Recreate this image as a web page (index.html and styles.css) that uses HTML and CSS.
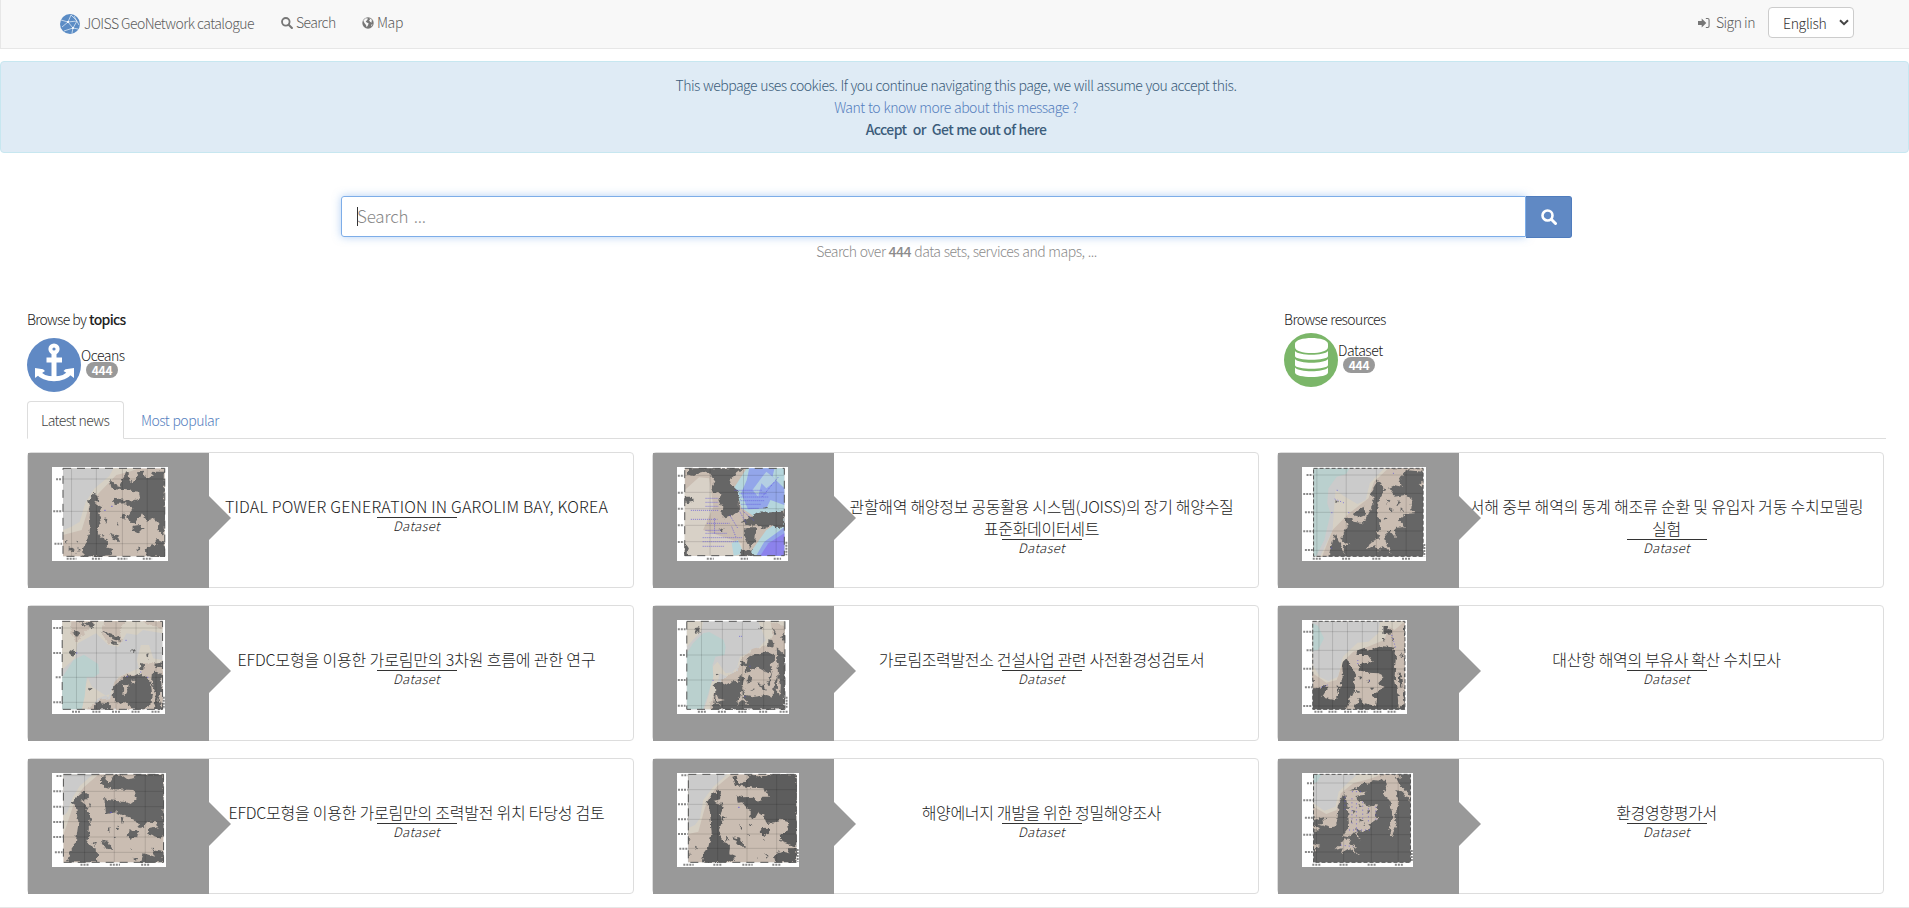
FILE: index.html
```html
<!DOCTYPE html>
<html lang="en">
<head>
<meta charset="utf-8">
<title>JOISS GeoNetwork catalogue</title>
<link rel="stylesheet" href="styles.css">
</head>
<body>
<svg class="defs" width="0" height="0"><filter id="coast" x="0" y="0" width="1" height="1"><feTurbulence type="fractalNoise" baseFrequency=".09" numOctaves="2" seed="4"/><feDisplacementMap in="SourceGraphic" scale="14" xChannelSelector="R" yChannelSelector="G"/></filter></svg>
<nav class="navbar">
  <a class="brand"><svg class="logo" viewBox="0 0 20 20"><circle cx="10" cy="10" r="10" fill="#5b8cc5"/><path d="M11 1 8 8 1 6M8 8l9-1M8 8l5 6-9 3M8 8 2 13M13 14l5 1M13 14l-1 5M11 1l6 6-4 7M14 2l5 9" fill="none" stroke="#dce8f4" stroke-width=".8"/><circle cx="8" cy="8" r="1.1" fill="#fff"/><circle cx="13" cy="14" r="1" fill="#fff"/></svg><span>JOISS GeoNetwork catalogue</span></a>
  <a class="nav-search"><svg class="ico" viewBox="0 0 13 13"><circle cx="5.2" cy="5.2" r="4.1" fill="none" stroke="#777" stroke-width="2"/><path d="m8.3 8.3 3.5 3.5" stroke="#777" stroke-width="2.3" stroke-linecap="round"/></svg><span>Search</span></a>
  <a class="nav-map"><svg class="ico" viewBox="0 0 12 12"><circle cx="6" cy="6" r="5.7" fill="#777"/><path d="M1.300 3.400 3.600 1.200 6 1.500 5.200 3 3.700 4.400 4.800 5.400 6.600 6.300 6 8.300 4.600 10.200 4 8 2.400 6ZM7.500 1l2.900 2.200-1 .6L10 5.600 8.300 5 7.100 3.600 8 2.600ZM9.300 7.400l1.300.2-1.400 2Z" fill="#f8f8f8"/></svg><span>Map</span></a>
  <a class="signin"><svg class="ico" viewBox="0 0 13 12"><path d="M0 3.800h4V1l5 5-5 5V8.200H0Z" fill="#777"/><path d="M8.500 1.200h2q1.500 0 1.500 1.500v6.600q0 1.500-1.500 1.500h-2" fill="none" stroke="#777" stroke-width="1.200"/></svg><span>Sign in</span></a>
  <div class="lang"><span>English</span><svg viewBox="0 0 10 7"><path d="m1 1.200 4 4 4-4" fill="none" stroke="#444" stroke-width="2"/></svg></div>
</nav>

<div class="alert">
  <div class="a1">This webpage uses cookies. If you continue navigating this page, we will assume you accept this.</div>
  <div class="a2">Want to know more about this message ?</div>
  <div class="a3">Accept&nbsp; or&nbsp; Get me out of here</div>
</div>

<div class="search">
  <div class="field"><i class="caret"></i><span>Search ...</span></div>
  <div class="go"><svg viewBox="0 0 16 16"><circle cx="6.500" cy="6.500" r="5" fill="none" stroke="#fff" stroke-width="2.600"/><path d="m10.500 10.500 4 4" stroke="#fff" stroke-width="3" stroke-linecap="round"/></svg></div>
</div>
<div class="over">Search over <b>444</b> data sets, services and maps, ...</div>

<main>
<section class="browse">
  <div>
    <div class="bt">Browse by <b>topics</b></div>
    <div class="item ocean">
      <svg viewBox="0 0 54 54"><circle cx="27" cy="27" r="27" fill="#6089c4"/><g fill="none" stroke="#fff"><circle cx="27" cy="11" r="3.600" stroke-width="4"/><path d="M27 15v26M19.500 22H35" stroke-width="5"/><path d="M11.500 34c4 9 27 9 31 0" stroke-width="4.800"/></g><path d="M8 30v10l3-2.300L18 33l-2-1.700ZM47 30v10l-3-2.300L36.500 33l2-1.700Z" fill="#fff"/></svg>
      <div><div class="nm">Oceans</div><span class="badge">444</span></div>
    </div>
  </div>
  <div>
    <div class="bt br">Browse resources</div>
    <div class="item data">
      <svg viewBox="0 0 54 54"><circle cx="27" cy="27" r="27" fill="#7bb669"/><path d="M11 11c0-8 33-8 33 0v3c0 8-33 8-33 0ZM11 18c4 5 29 5 33 0v5c0 5-33 5-33 0ZM11 26c4 5 29 5 33 0v6c0 5-33 5-33 0ZM11 34.500c4 5 29 5 33 0v5c0 6-33 6-33 0Z" fill="#fff"/></svg>
      <div><div class="nm">Dataset</div><span class="badge">444</span></div>
    </div>
  </div>
</section>

<div class="tabs"><a class="tab on">Latest news</a><a class="tab">Most popular</a></div>

<section class="cards">
  <article class="card">
    <div class="thumb"><svg class="map" width="116" height="94" viewBox="127 501 285 282" preserveAspectRatio="none">
      <rect class="w" x="127" y="501" width="285" height="282"/><rect class="sand" x="154" y="505" width="250" height="264"/>
      <path class="pale" d="M154 505H340L315 516 285 525 240 582 220 610 200 690 154 705Z"/><path class="sea" d="M154 505H278L268 528 232 565 210 605 195 665 175 680 154 690Z"/>
      <path class="land" d="M215 600 232 578 242 590 240 603 228 607 250 622 243 640 248 655 238 690 247 712 262 722 262 742 275 748 270 765 250 769H205L203 745 213 725 220 690 217 650 220 615ZM270 540 283 555 292 558 305 528 309 514 315 518 318 545 330 541 341 526 338 514 350 512 355 530 368 533 374 515H404V695L398 705 386 690 389 667 378 655 360 662 348 640 333 670 318 668 312 648 327 625 308 610 281 612 278 590 290 596 320 605 343 594 341 575 273 566ZM404 732V769H358L355 750 370 736 386 738 380 714 404 728ZM325 678 345 674 350 685 338 700 325 692ZM270 698 290 710 294 727 275 718ZM301 640l8 10-4 12-8-10ZM290 665l4 10-6 4ZM168 742l12 2-2 12-10-2ZM160 720l6 2-3 9ZM190 740l5 6-5 14ZM336 738l8 5-5 12ZM256 655l7 3-2 10ZM250 700l6 4-4 8ZM187 722l7 3-4 6Z"/>
      <path class="grid" d="M175 505V769M236 505V769M300 505V769M361 505V769M154 537H404M154 634H404M154 731H404"/><path class="dots" d="M255 631h4M272 619h4"/><path class="frame" d="M154 505H404V769H154Z"/><path class="lab" d="M137 538H152M130 634H152M133 731H152M163 776H187M225 776H248M288 776H312M350 776H373"/>
    </svg></div>
    <div class="body"><h3 class="t1">TIDAL POWER GENERATION IN GAROLIM BAY, KOREA</h3><div class="kind">Dataset</div></div>
  </article>

  <article class="card">
    <div class="thumb"><svg class="map" width="111" height="94" viewBox="91 81 272 282" preserveAspectRatio="none">
      <rect class="w" x="91" y="81" width="272" height="282"/><rect class="sand" x="110" y="85" width="244" height="262"/>
      <path fill="#d8d1c7" d="M110 150 145 112 170 115 180 200 155 270 250 310 250 347H110Z"/>
      <path fill="#b5d6dd" d="M262 85H354V210L300 245 250 205 230 145ZM354 235V347H265L310 270ZM225 310 240 300 255 340 230 347Z"/>
      <path fill="#93a6ea" d="M268 85H330L325 110 354 145V195L320 180 310 205 265 208 248 160 262 120ZM354 262V347H285L305 305Z"/>
      <path fill="#8c82ec" d="M354 280V347H295L315 310Z"/><path fill="#b4cfe3" d="M310 95 335 120 310 145 298 130 290 170 276 150 300 110Z"/>
      <path class="land" d="M118 85H255L220 118 222 132 238 150 245 190 245 210 225 228 210 235 200 222 202 200 195 180 200 162 175 154 178 135 185 125 170 100 155 92 135 108 118 104ZM110 170H130L132 185 112 190ZM247 247 290 215 350 212 354 225V262L335 265 325 255 300 268 295 255 270 257ZM256 262 285 262 283 300 270 325 257 292ZM110 310 120 328 115 347H110ZM247 332 268 327 282 347H247ZM298 205l10-7 4 7ZM190 270l15-6-4 10Z"/>
      <path class="grid" d="M172 85V347M254 85V347M334 85V347M110 106H354M110 157H354M110 206H354M110 256H354M110 305H354"/>
      <path class="dots" stroke-dasharray="1 1" d="M161 175H192M161 187H192M161 199H192M125 211H194M125 238H190M165 250H220M161 271H200M161 280H215M154 293H250M154 305H242M154 319H208M232 151H300M244 161H310M247 171H316M247 182H306M249 193H298M249 205H293M245 215 260 248M252 213 280 242M220 225 240 265M300 170 340 110M183 235V280M225 260 235 290"/><path class="frame" d="M110 85H354V347H110Z"/><path class="lab" d="M93 107H108M93 158H108M93 206H108M93 256H108M93 306H108M164 356H181M247 356H265M328 356H346M359 305V346"/>
    </svg></div>
    <div class="body"><h3 class="t2">관할해역 해양정보 공동활용 시스템(JOISS)의 장기 해양수질<br>표준화데이터세트</h3><div class="kind">Dataset</div></div>
  </article>

  <article class="card">
    <div class="thumb"><svg class="map" width="124" height="94" viewBox="101 501 300 282" preserveAspectRatio="none">
      <rect class="w" x="101" y="501" width="300" height="282"/><rect class="land" x="129" y="505" width="265" height="264"/>
      <path class="sand" d="M129 505H394V515L350 510 345 525 335 545 343 560 325 556 310 565 325 590 350 585 368 600 365 630 374 640 350 642 335 660 350 680 325 685 328 715 312 690 300 700 305 730 318 758 295 735 285 752 278 735 258 748 268 725 290 715 280 695 292 690 290 660 280 650 287 600 300 570 285 540 268 575 275 610 250 670 225 665 222 650 205 655 212 680 195 720 218 735 200 735 205 765 190 725 180 700 165 769H129Z"/>
      <path class="pale" d="M129 505H310L275 545 262 595 215 640 175 690 150 769H129Z"/><path class="sea" d="M129 505H300L265 550 255 600 235 612 205 590 182 570 175 690 145 769H129Z"/><path class="teal" d="M129 505H216L208 522 185 530 165 565 162 610 170 640 155 720 135 769H129Z"/>
      <path class="land" d="M225 640 250 620 255 645 235 655ZM290 550l5 8-5 5ZM305 595l8 8-8 8ZM335 600l5 12-8 3ZM315 625l8 5-6 7ZM300 650l8 8-9 4ZM340 625l6 6-7 4ZM182 600l6 5-6 5Z"/><path class="sand" d="M380 555 394 540V560ZM290 600l15 5-5 40-15 10Z"/>
      <path class="grid" d="M137 505V769M208 505V769M281 505V769M353 505V769M129 525H394M129 580H394M129 637H394M129 693H394M129 751H394"/><path class="dots" stroke-dasharray="1 2" d="M180 597 205 610M185 571h3M213 638h3M172 638h3M321 520h3M171 744h3"/><path class="frame fine" d="M129 505H394V769H129Z"/><path class="lab" d="M112 525H127M104 582H127M108 637H127M104 694H127M108 750H127M127 776H148M198 776H219M271 776H292M343 776H365M397 732V769"/>
    </svg></div>
    <div class="body"><h3 class="t3">서해 중부 해역의 동계 해조류 순환 및 유입자 거동 수치모델링<br>실험</h3><div class="kind">Dataset</div></div>
  </article>

  <article class="card">
    <div class="thumb"><svg class="map" width="113" height="94" viewBox="127 90 277 282" preserveAspectRatio="none">
      <rect class="w" x="127" y="90" width="277" height="282"/><rect class="sea" x="152" y="94" width="246" height="264"/>
      <path class="pale" d="M152 94H398V130L350 120 335 135 310 130 290 170 265 165 235 130 190 160 183 205 152 240ZM345 165 365 165 375 205 398 210V260L345 255 300 255 275 310 240 325 220 358H200L205 300 215 265 225 290 265 322 290 260 340 235 335 210Z"/>
      <path class="sand" d="M175 94H235L210 125 190 158 172 130ZM255 94H305L295 120 300 155 265 160 250 125ZM345 94H398V118ZM398 220V358H215L240 330 270 325 280 275 310 250 345 255 350 220Z"/>
      <path class="teal" d="M152 262 180 210 205 194 240 222 243 250 230 262H212L207 320 200 358H152Z"/>
      <path class="land" d="M192 96 230 98 226 115 213 108 210 102ZM182 122l10 2 1 10-10 6-4-8ZM246 123 270 132 295 142 293 152 273 147 262 135ZM272 152l14 4 4 8-14 0ZM170 186l8-7 6 8-5 13-9-4ZM322 177l8 4-2 8-6-4ZM358 195l6-2-3 14ZM343 215 355 225 353 237 343 238ZM378 222 398 217V232L380 230ZM276 290 295 272 310 255 325 260 340 250 355 262 370 280 372 310 368 345 350 358H325L310 335 292 345 276 325ZM375 240 395 255 398 290 388 330 395 358H377L382 310 372 285ZM230 335 245 332 252 342 265 335 275 358H228L235 345ZM218 290l6 8-5 5ZM205 96l6 15-10-6Z"/>
      <path class="sand" d="M300 280l15 5-8 35-8-10 5-10ZM325 268l7 7-10 8Z"/>
      <path class="grid" d="M187 94V358M236 94V358M284 94V358M333 94V358M382 94V358M152 114H398M152 189H398M152 262H398M152 337H398"/><path class="dots" d="M186 189h3M307 151h3M343 246h3M310 260h3M360 262h3"/><path class="frame" d="M152 94H398V358H152Z"/><path class="lab" d="M130 114H149M130 189H149M136 262H149M130 337H149M176 365H198M226 365H247M274 365H296M322 365H344M371 365H393M401 320V357"/>
    </svg></div>
    <div class="body"><h3 class="t4">EFDC모형을 이용한 가로림만의 3차원 흐름에 관한 연구</h3><div class="kind">Dataset</div></div>
  </article>

  <article class="card">
    <div class="thumb"><svg class="map" width="112" height="94" viewBox="91 540 274 282" preserveAspectRatio="none">
      <rect class="w" x="91" y="540" width="274" height="282"/><rect class="sea" x="115" y="544" width="240" height="264"/>
      <path class="pale" d="M115 544H155L150 575 130 600 115 620ZM290 544H355V650L270 630 240 680 215 710 195 700 178 808H158L170 760 178 680 190 665 210 700 235 695 245 650 290 625 308 600Z"/><path class="sand" d="M320 544 355 560V808H170L185 750 200 720 240 690 250 655 275 630 310 615 325 590Z"/>
      <path class="teal" d="M115 640 130 610 155 580 170 576 205 600 210 620 207 645 185 650 178 675 180 710 165 770 155 808H115Z"/>
      <path class="land" d="M135 564l10-2 4 9-9 11-7-7ZM292 556l8 4-1 8-6 0ZM325 560l7 15-2 10ZM312 598l12 2 4 16-8 8-8-6ZM343 592 355 585V605ZM246 662 262 668 265 652 285 642 310 635 328 645 328 665 315 675 325 690 318 735 305 725 308 755 290 740 275 752 260 748 262 715 275 695 258 700 262 680 250 675ZM335 625 355 645V808H177L185 755 183 730 200 725 215 735 228 720 240 730 245 705 255 715 250 745 260 765 280 770 310 765 325 770 328 735 338 700ZM186 675l3 12M183 700l12 5-10 4Z"/>
      <path class="sand" d="M262 695 285 680 315 700 325 690 315 725 300 735 290 730 305 765 280 745 265 755 255 735 275 720ZM250 745 254 775 270 795 250 780 235 795 245 770ZM338 700 345 735 343 768 335 745ZM185 755 192 775 208 780 190 785 198 800 185 785Z"/>
      <path class="grid" d="M151 544V808M202 544V808M251 544V808M303 544V808M353 544V808M115 568H355M115 645H355M115 720H355M115 797H355"/><path class="dots" stroke-dasharray="1 1" d="M243 589H250M178 721h3M268 679h4M256 770h3"/><path class="frame" d="M115 544H355V808H115Z"/><path class="lab" d="M93 568H112M98 645H112M93 720H112M93 797H112M142 815H162M191 815H212M241 815H263M292 815H314M342 815H363M359 770V806"/>
    </svg></div>
    <div class="body"><h3 class="t5">가로림조력발전소 건설사업 관련 사전환경성검토서</h3><div class="kind">Dataset</div></div>
  </article>

  <article class="card">
    <div class="thumb"><svg class="map" width="105" height="94" viewBox="101 90 254 282" preserveAspectRatio="none">
      <rect class="w" x="101" y="90" width="254" height="282"/><rect class="dark" x="127" y="94" width="223" height="264"/>
      <path class="sand" d="M127 94H350V290L345 315 350 340 335 355 332 310 325 260 328 200 320 172 290 168 262 182 250 170 235 180 232 195 260 195 272 215 240 222 238 240 262 248 290 250 298 265 285 280 302 292 280 305 268 315 282 330 280 348 250 340 240 320 225 358H207L228 300 225 280 232 255 215 215 205 205 198 220 200 255 190 315 180 328 150 320 165 290 127 295Z"/>
      <path class="pale" d="M127 94H350L325 120 312 110 300 150 260 170 225 185 200 215 185 270 160 278 127 250Z"/><path class="sea" d="M127 94H290L285 130 262 155 235 158 200 200 188 260 165 273 145 262 127 225Z"/><path class="teal" d="M127 100 140 108 154 145 140 180 127 182Z"/>
      <path class="dark" d="M298 108l8 0 3 8 8 4-2 14-17-2ZM296 145l8 3-5 8ZM318 138l6 10-6 6ZM240 258l8 4-7 7ZM260 268l6 4-6 5ZM340 185l7 15-4 5ZM335 245l6 12 3 35-8-12ZM232 302l8 3-8 4ZM270 292l6 5-8 3ZM185 285l7 8-6 18ZM150 285l10 3-12 10Z"/>
      <path class="grid" d="M142 94V358M175 94V358M211 94V358M247 94V358M284 94V358M319 94V358M127 125H350M127 181H350M127 237H350M127 292H350M127 348H350"/><path class="dots" stroke-dasharray="1 2" d="M236 210V225M264 271V276M318 135 328 175M147 292 163 285"/><path class="frame fine" d="M127 94H350V358H127Z"/><path class="lab" d="M104 125H125M112 181H125M104 236H125M108 292H125M104 348H125M131 365H151M165 365H187M203 365H221M236 365H259M274 365H293M308 365H330"/>
    </svg></div>
    <div class="body"><h3 class="t6">대산항 해역의 부유사 확산 수치모사</h3><div class="kind">Dataset</div></div>
  </article>

  <article class="card">
    <div class="thumb"><svg class="map" width="114" height="94" viewBox="127 549 280 282" preserveAspectRatio="none">
      <rect class="w" x="127" y="549" width="280" height="282"/><rect class="sand" x="155" y="553" width="246" height="264"/>
      <path class="pale" d="M155 553H242L205 592 185 625 170 680 155 735Z"/><path class="sea" d="M155 553H228L195 588 178 622 165 665 155 678Z"/>
      <path class="land" d="M185 625 205 605 215 612 215 627 197 632 210 645 218 670 220 720 213 760 237 778 238 817H163L172 785 185 760 192 700 185 645 177 640ZM245 560 258 555 265 582 278 557 295 553 312 568 330 565 333 553H401V740L388 745 365 735 362 718 387 712 385 697 365 695 345 715 330 690 300 675 285 667 260 672 255 620 265 630 300 635 320 642 335 628 330 600 280 598 255 590 245 580ZM401 787V817H345L352 790 380 800 372 780ZM315 722 335 720 342 732 325 748 313 740ZM247 752 265 755 275 780 258 775ZM296 680l7 3-5 20ZM262 710l6 4 0 12-4-3ZM285 710l7 2-4 8ZM217 683l8 2-1 15ZM212 728l8 6-6 10ZM225 755l10 5-4 8ZM215 640l8 3-4 12ZM282 740l6 4-6 2ZM320 775l4 6-5 1ZM327 803l10 3-4 7ZM375 770l4 4-5 8Z"/>
      <path class="grid" d="M207 553V817M280 553V817M356 553V817M155 557H401M155 604H401M155 650H401M155 695H401M155 741H401M155 787H401"/><path class="dots" d="M269 667h5"/><path class="frame" d="M155 553H401V817H155Z"/><path class="lab" d="M138 558H153M130 604H153M130 650H153M130 696H153M130 741H153M134 787H153M197 824H218M269 824H294M346 824H367"/>
    </svg></div>
    <div class="body"><h3 class="t7">EFDC모형을 이용한 가로림만의 조력발전 위치 타당성 검토</h3><div class="kind">Dataset</div></div>
  </article>

  <article class="card">
    <div class="thumb"><svg class="map" width="122" height="94" viewBox="111 99 366 282" preserveAspectRatio="none">
      <rect class="w" x="111" y="99" width="366" height="282"/><rect class="sand" x="145" y="103" width="324" height="264"/>
      <path class="pale" d="M145 103H275L230 140 202 180 190 220 175 275 145 282Z"/><path class="sea" d="M145 103H262L220 140 190 180 180 235 165 255 145 264Z"/>
      <path class="dark" d="M200 187 215 165 235 150 243 157 240 178 220 183 252 200 240 225 248 240 237 270 245 300 270 317 268 340 288 348 280 360 255 367H186L190 340 205 320 215 280 210 215ZM277 110 290 107 295 130 307 130 325 112 330 103 350 108 370 112 385 103H469V322L450 315 425 305 418 285 435 280 446 260 442 242 425 238 405 250 380 252 372 228 355 217 345 235 332 233 332 210 320 205 310 187 293 188 290 165 310 172 340 170 355 187 367 170 387 170 370 145 340 143 285 135ZM469 325V367H405L402 345 430 335 450 340 440 325ZM358 265 385 263 392 273 375 288 360 280ZM277 290 300 297 315 322 290 312ZM297 250l10 15-3 5ZM327 248l9 4-6 10ZM245 228l12 3-7 12ZM258 290l10 6-8 12ZM240 320l12 6-2 8ZM322 283l8 2-6 3ZM145 340l10 2-8 10ZM165 317l6 3-4 7ZM376 340l10 8-7 8ZM415 330l6 5-5 3ZM348 350l5 2-5 4ZM245 185l5 5-5 7ZM370 297l5 4-6 2ZM145 290l5 6-5 5Z"/>
      <path class="grid" d="M145 103V367M233 103V367M321 103V367M410 103V367M145 149H469M145 193H469M145 238H469M145 282H469M145 325H469"/><path class="dots" d="M294 202h5"/><path class="frame" d="M145 103H469V367H145Z"/><path class="lab" d="M124 106H143M114 149H143M114 193H143M114 238H143M114 282H143M118 326H143M130 374H161M220 374H246M307 374H338M397 374H424M473 327V365"/>
    </svg></div>
    <div class="body"><h3 class="t8">해양에너지 개발을 위한 정밀해양조사</h3><div class="kind">Dataset</div></div>
  </article>

  <article class="card">
    <div class="thumb"><svg class="map" width="111" height="94" viewBox="101 549 269 282" preserveAspectRatio="none">
      <rect class="w" x="101" y="549" width="269" height="282"/><rect class="land" x="129" y="553" width="235" height="264"/>
      <path class="sand" d="M129 553H335L340 570 360 600 364 635 345 605 330 600 335 640 325 680 330 705 318 740 312 710 320 680 315 630 295 610 308 590 300 572 270 570 262 585 250 575 235 595 215 600 255 605 250 615 230 618 240 630 262 650 282 645 278 680 288 682 268 700 265 720 245 722 232 715 242 755 228 725 215 742 198 738 215 710 212 650 205 610 200 615 190 640 187 690 180 710 165 712 145 705 160 680 129 690ZM205 745 220 748 215 762 235 770 225 775 237 795 215 775 195 790 200 775 180 780 195 762Z"/>
      <path class="pale" d="M129 553H295L270 565 225 580 195 610 185 660 160 672 129 650Z"/><path class="sea" d="M129 553H235L215 575 190 605 182 650 155 662 129 640Z"/><path class="teal" d="M129 553H148L138 575 129 580Z"/>
      <path class="land" d="M328 560 345 570 362 590 362 612 340 590ZM238 645l8 4-6 6ZM260 660l6 4-6 7ZM225 660l6 3-6 9ZM240 685l6 5-5 5ZM250 700l4 3-4 4ZM220 690l5 6-5 8Z"/><path class="sand" d="M129 705 142 715 135 722 129 720ZM129 762 145 767 135 775 131 790Z"/>
      <path class="grid" d="M136 553V817M202 553V817M269 553V817M334 553V817M129 579H364M129 631H364M129 682H364M129 734H364M129 786H364"/><path class="dots" stroke-dasharray="1 3" d="M205 620V665M222 625V700M248 635V690M233 640V725M262 655V700M280 650V690M215 720H268M195 765 225 770M222 605H250"/><path class="frame fine" d="M129 553H364V817H129Z"/><path class="lab" d="M113 580H127M104 631H127M108 683H127M104 734H127M108 786H127M126 824H147M192 824H213M260 824H280M326 824H346M367 780V815"/>
    </svg></div>
    <div class="body"><h3 class="t9">환경영향평가서</h3><div class="kind">Dataset</div></div>
  </article>
</section>
</main>
<footer class="foot"></footer>
</body>
</html>
```
FILE: styles.css
```css
* { box-sizing: border-box; }
body { margin: 0; height: 908px; overflow: hidden; background: #fff; color: #222; font: 300 14px/20px "Noto Sans CJK KR", "Noto Sans", sans-serif; }
svg { display: block; flex: none; }
span, a, .bt, .nm, .alert div, .over { white-space: nowrap; }
.defs { position: absolute; }

.navbar { display: flex; align-items: flex-start; height: 49px; padding: 12px 55px 0 59px; background: #f8f8f8; border-left: 1px solid #e7e7e7; border-bottom: 1px solid #e7e7e7; color: #5e5e5e; }
.navbar a { display: flex; }
.logo { width: 20px; height: 20px; margin-right: 4px; }
.brand { padding-top: 2px; width: 221px; letter-spacing: -.55px; }
.brand span { margin-top: -1px; }
.ico { width: 12px; height: 12px; margin: 5px 3px 0 0; }
.nav-search { width: 81px; letter-spacing: -.6px; }
.nav-map { letter-spacing: -.4px; }
.signin { margin-left: auto; margin-right: 13px; letter-spacing: -.5px; }
.signin .ico { margin-right: 6px; }
.lang { display: flex; align-items: center; justify-content: space-between; width: 86px; height: 31px; margin-top: -5px; padding: 0 4px 0 14px; background: #fff; border: 1px solid #ccc; border-radius: 4px; color: #333; letter-spacing: -.35px; }
.lang svg { width: 10px; height: 7px; }

.alert { margin-top: 12px; height: 92px; padding: 12px 0 0 3px; background: #dfebf5; border: 1px solid #c7e7f0; border-radius: 4px; text-align: center; color: #3c5d7b; line-height: 22px; }
.a1 { letter-spacing: -.5px; word-spacing: .5px; }
.a2 { color: #5680be; letter-spacing: -.5px; word-spacing: .7px; }
.a3 { line-height: 23px; font-weight: 500; letter-spacing: -.6px; word-spacing: .5px; }

.search { display: flex; margin: 43px 337px 0 341px; height: 42px; }
.field { display: flex; align-items: center; flex: 1; height: 41px; padding-left: 15px; border: 1px solid #7dade8; border-radius: 3px 0 0 3px; box-shadow: 0 0 8px rgba(102,160,233,.5); font-size: 17px; letter-spacing: -.2px; word-spacing: 2px; color: #888; }
.field span { margin: -2px 0 0 -1px; }
.caret { width: 1px; height: 19px; background: #333; }
.go { display: flex; align-items: center; justify-content: center; width: 46px; height: 42px; background: #6089c4; border: 1px solid #4f7cbd; border-left: 0; border-radius: 0 3px 3px 0; position: relative; }
.go svg { width: 16px; height: 16px; }
.over { margin-top: 3px; padding-left: 4px; text-align: center; color: #8c8c8c; letter-spacing: -.5px; word-spacing: .6px; }
b { font-weight: 500; }

main { padding: 0 23px 0 27px; }
.browse { display: grid; grid-template-columns: 1257px 1fr; margin-top: 48px; height: 92px; }
.bt { letter-spacing: -.72px; word-spacing: .5px; }
.br { letter-spacing: -.6px; word-spacing: .7px; }
.item { display: flex; letter-spacing: -.45px; }
.item svg { width: 54px; height: 54px; }
.ocean { margin-top: 9px; }
.data { margin-top: 4px; }
.nm { margin-top: 8px; line-height: 18px; }
.badge { display: block; width: 32px; height: 16px; margin: -2px 0 0 5px; border-radius: 8px; background: #999; color: #fff; font-size: 12px; font-weight: 700; letter-spacing: -.3px; line-height: 16px; text-align: center; }

.tabs { display: flex; height: 38px; border-bottom: 1px solid #ddd; color: #5680be; }
.tab { height: 38px; padding: 9px 15px 0; letter-spacing: -.5px; word-spacing: .5px; }
.tab.on { width: 97px; margin-right: 2px; padding: 8px 13px 0; border: 1px solid #ddd; border-bottom-color: #fff; border-radius: 4px 4px 0 0; background: #fff; color: #444; letter-spacing: -.58px; }

.cards { display: grid; grid-template-columns: repeat(3, 607px); grid-auto-rows: 136px; gap: 17px 18px; margin-top: 13px; }
.card { display: flex; border: 1px solid #ddd; border-radius: 4px; }
.thumb { position: relative; z-index: 1; width: 181px; height: 135px; padding: 14px 0 0 24px; background: #999; flex: none; }
.thumb::after { content: ""; position: absolute; left: 181px; top: 43px; border: 22px solid transparent; border-right: 0; border-left-color: #999; }
.body { flex: 1; padding: 42px 9px 0 0; display: flex; flex-direction: column; align-items: center; }
h3 { margin: 0; font-size: 16px; font-weight: 300; line-height: 22px; text-align: center; white-space: nowrap; letter-spacing: -.35px; }
.t1 { letter-spacing: .19px; }
.t2 { letter-spacing: -.3px; }
.t3 { letter-spacing: -.19px; }
.t4 { letter-spacing: -.15px; }
.t7 { letter-spacing: -.24px; }
.kind { width: 80px; border-top: 1px solid #333; font-size: 13px; font-style: italic; line-height: 14px; letter-spacing: .4px; text-align: center; padding-top: 1px; }

.map { overflow: hidden; }
.w { fill: #fff; }
.sand { fill: #cabdb2; }
.pale { fill: #d6d0c4; }
.sea { fill: #cbcbcb; }
.teal { fill: #bad0ce; }
.land { fill: #666; }
.dark { fill: #5d5d5d; }
path.land, path.dark, path.sand { filter: url(#coast); }
.grid, .frame, .lab, .dots { fill: none; vector-effect: non-scaling-stroke; }
.grid { stroke: rgba(0,0,0,.13); stroke-width: 1; }
.frame { stroke: #555; stroke-width: 1; stroke-dasharray: 8 6; }
.fine { stroke-dasharray: 4 2; }
.lab { stroke: #888; stroke-width: 2; stroke-dasharray: 2 1; }
.dots { stroke: #5a50dc; stroke-width: 1; stroke-opacity: .7; }

.foot { margin-top: 13px; height: 1px; background: #e7e7e7; }
```
